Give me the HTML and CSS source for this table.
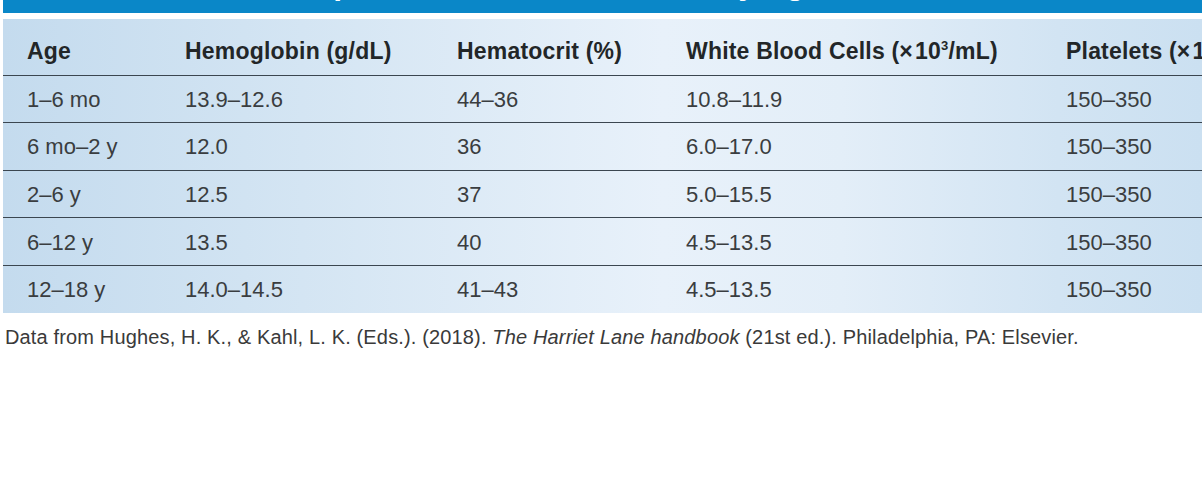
FILE: index.html
```html
<!DOCTYPE html>
<html>
<head>
<meta charset="utf-8">
<link rel="stylesheet" href="styles.css">
</head>
<body>
<div class="page">
  <div class="titlebar"><span class="title">Normal Blood Component Values in Children by Age</span></div>
  <div class="tablewrap">
    <table class="values">
      <colgroup>
        <col class="c1"><col class="c2"><col class="c3"><col class="c4"><col class="c5">
      </colgroup>
      <thead>
        <tr>
          <th>Age</th>
          <th>Hemoglobin (g/dL)</th>
          <th>Hematocrit (%)</th>
          <th>White Blood Cells (×&#8202;10<sup>3</sup>/mL)</th>
          <th>Platelets (×&#8202;10<sup>3</sup>/mL)</th>
        </tr>
      </thead>
      <tbody>
        <tr><td>1–6 mo</td><td>13.9–12.6</td><td>44–36</td><td>10.8–11.9</td><td>150–350</td></tr>
        <tr><td>6 mo–2 y</td><td>12.0</td><td>36</td><td>6.0–17.0</td><td>150–350</td></tr>
        <tr><td>2–6 y</td><td>12.5</td><td>37</td><td>5.0–15.5</td><td>150–350</td></tr>
        <tr><td>6–12 y</td><td>13.5</td><td>40</td><td>4.5–13.5</td><td>150–350</td></tr>
        <tr><td>12–18 y</td><td>14.0–14.5</td><td>41–43</td><td>4.5–13.5</td><td>150–350</td></tr>
      </tbody>
    </table>
  </div>
  <p class="source">Data from Hughes, H. K., &amp; Kahl, L. K. (Eds.). (2018). <em>The Harriet Lane handbook</em> (21st ed.). Philadelphia, PA: Elsevier.</p>
</div>
</body>
</html>
```
FILE: styles.css
```css
html, body {
  margin: 0;
  padding: 0;
  background: #ffffff;
}

.page {
  width: 1202px;
  height: 482px;
  overflow: hidden;
  padding-left: 3px;
  box-sizing: border-box;
  font-family: "Liberation Sans", Arial, sans-serif;
}

.titlebar {
  height: 13px;
  background: #0a87c8;
  overflow: hidden;
  margin-bottom: 6px;
  padding-left: 50px;
}

.title {
  display: block;
  color: #ffffff;
  font-weight: 700;
  font-size: 32px;
  line-height: 32px;
  margin-top: -33px;
  white-space: nowrap;
  letter-spacing: -0.6px;
}

.tablewrap {
  width: 1199px;
  overflow: hidden;
  background: linear-gradient(90deg, #c4dbee 0%, #d4e5f3 25%, #e8f1fa 55%, #e3eef8 70%, #d2e4f3 88%, #cbe0f1 100%);
}

.values {
  border-collapse: collapse;
  table-layout: fixed;
  width: 1300px;
}

.c1 { width: 182px; }
.c2 { width: 272px; }
.c3 { width: 229px; }
.c4 { width: 380px; }
.c5 { width: 237px; }

.values th,
.values td {
  text-align: left;
  white-space: nowrap;
  padding: 0;
  vertical-align: middle;
}

.values th:first-child,
.values td:first-child {
  padding-left: 24px;
}

.values thead tr {
  height: 56px;
  border-bottom: 1.5px solid #3b4650;
}

.values th {
  font-size: 23px;
  font-weight: 700;
  color: #222628;
  padding-top: 10px;
  letter-spacing: 0.2px;
}

.values th sup {
  font-size: 13px;
  vertical-align: 9px;
  line-height: 0;
}

.values tbody tr {
  height: 47.6px;
  border-bottom: 1.5px solid #3b4650;
}

.values tbody tr:last-child {
  border-bottom: none;
}

.values td {
  font-size: 22px;
  color: #3a3d40;
  padding-top: 2px;
}

.source {
  margin: 13px 0 0 2px;
  font-size: 20px;
  letter-spacing: 0.15px;
  color: #3a3a3a;
}

.source em {
  font-style: italic;
}
```
